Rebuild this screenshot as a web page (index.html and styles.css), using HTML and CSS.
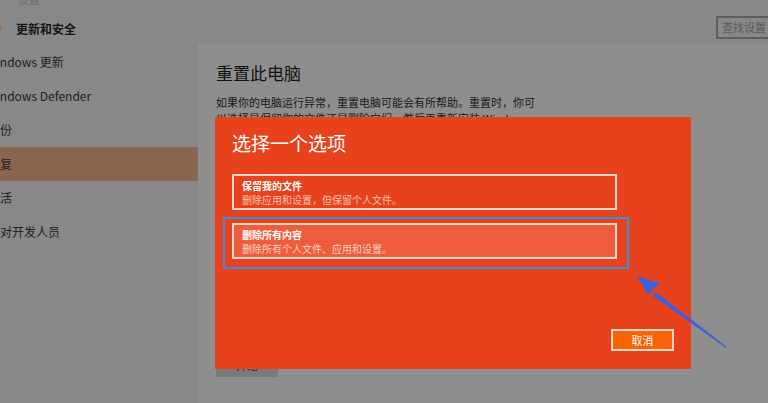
FILE: index.html
```html
<!DOCTYPE html>
<html lang="zh-CN">
<head>
  <meta charset="UTF-8">
  <title>设置 - 更新和安全</title>
  <link rel="stylesheet" href="styles.css">
</head>
<body>

  <div class="topbar">
    <div class="crumb">设置</div>
    <div class="title-row">
      <span class="dot"></span>
      <h1>更新和安全</h1>
    </div>
    <div class="search">查找设置</div>
  </div>

  <div class="main">
    <ul class="sidebar">
      <li>Windows 更新</li>
      <li>Windows Defender</li>
      <li>备份</li>
      <li class="active">恢复</li>
      <li>激活</li>
      <li>针对开发人员</li>
    </ul>

    <div class="content">
      <h2>重置此电脑</h2>
      <p>如果你的电脑运行异常，重置电脑可能会有所帮助。重置时，你可<br>以选择是保留你的文件还是删除它们，然后再重新安装 Windows。</p>
      <div class="start-btn">开始</div>
    </div>
  </div>

  <!-- reset dialog -->
  <div class="dialog">
    <h3>选择一个选项</h3>
    <div class="option">
      <div class="opt-title">保留我的文件</div>
      <div class="opt-desc">删除应用和设置，但保留个人文件。</div>
    </div>
    <div class="focus-ring">
      <div class="option selected">
        <div class="opt-title">删除所有内容</div>
        <div class="opt-desc">删除所有个人文件、应用和设置。</div>
      </div>
    </div>
    <div class="dialog-foot">
      <button class="cancel-btn">取消</button>
    </div>
  </div>

  <svg class="pointer" width="100" height="80" viewBox="0 0 100 80">
    <polygon points="92,74 21,19 18,23 91,75" fill="#3f5fd6"/>
    <polygon points="2,3 25,10 13,22" fill="#3f5fd6"/>
  </svg>

</body>
</html>
```

FILE: styles.css
```css
body {
  margin: 0;
  width: 768px;
  height: 403px;
  overflow: hidden;
  position: relative;
  font-family: "Noto Sans CJK SC", "Liberation Sans", sans-serif;
  background: #8e8e8e;
  color: #1c1c1c;
}
.topbar {
  height: 44px;
  background: #888888;
  position: relative;
}
.crumb {
  position: absolute;
  left: 18px;
  top: -9px;
  font-size: 11px;
  color: #6e6e6e;
}
.title-row {
  display: flex;
  align-items: center;
  height: 44px;
  padding-top: 12px;
  box-sizing: border-box;
}
.dot {
  width: 4px;
  height: 6px;
  margin-left: -2px;
  background: #a07050;
  border-radius: 2px;
}
.title-row h1 {
  margin: 0 0 0 14px;
  font-size: 12px;
  font-weight: bold;
  color: #151515;
}
.search {
  position: absolute;
  right: -14px;
  top: 16px;
  width: 58px;
  height: 19px;
  border: 2px solid #5e5e5e;
  font-size: 11px;
  line-height: 19px;
  padding-left: 4px;
  color: #5a5a5a;
}
.main {
  display: flex;
  height: 359px;
}
.sidebar {
  list-style: none;
  margin: 0;
  padding: 1px 0 0;
  width: 198px;
  background: #888888;
  overflow: hidden;
}
.sidebar li {
  height: 34px;
  line-height: 34px;
  font-size: 12px;
  color: #1e1e1e;
  margin-left: -14px;
  white-space: nowrap;
}
.sidebar li.active {
  background: #8a6650;
  margin-left: 0;
  text-indent: -12px;
}
.sidebar li:nth-child(3),
.sidebar li:nth-child(5),
.sidebar li:nth-child(6) {
  margin-left: -12px;
}
.content {
  flex: 1;
  padding: 16px 18px;
  background: #8e8e8e;
}
.content h2 {
  margin: 0;
  font-size: 17px;
  font-weight: normal;
  color: #111;
}
.content p {
  margin: 9px 0 0;
  font-size: 11px;
  line-height: 16px;
  color: #181818;
}
.start-btn {
  margin-top: 234px;
  width: 62px;
  height: 17px;
  background: #7a7a7a;
  color: #2a2a2a;
  font-size: 11px;
  line-height: 10px;
  text-align: center;
  overflow: hidden;
}
.dialog {
  position: absolute;
  left: 215px;
  top: 117px;
  width: 476px;
  height: 252px;
  background: #e8421c;
  box-sizing: border-box;
  padding: 13px 0 0 17px;
  color: #fff;
}
.dialog h3 {
  margin: 0 0 18px;
  font-size: 19px;
  font-weight: normal;
  line-height: 26px;
}
.option {
  width: 373px;
  height: 29px;
  border: 2px solid #f7d9d0;
  padding: 3px 0 0 8px;
  margin-bottom: 7px;
}
.opt-title {
  font-size: 10px;
  font-weight: bold;
  line-height: 13px;
}
.opt-desc {
  font-size: 10px;
  line-height: 15px;
  color: #f8c2b2;
}
.focus-ring {
  margin-left: -9px;
  width: 395px;
  border: 2px solid #3b8de0;
  padding: 4px 0 8px 7px;
}
.option.selected {
  margin: 0;
  background: #ee5c3c;
}
.option.selected .opt-desc {
  color: #fbd3c6;
}
.dialog-foot {
  display: flex;
  justify-content: flex-end;
  padding: 60px 17px 0 0;
}
.cancel-btn {
  width: 63px;
  height: 22px;
  background: #f86208;
  border: 2px solid #f9d8c6;
  color: #fff;
  font-family: inherit;
  font-size: 11px;
  padding: 0;
}
.pointer {
  position: absolute;
  left: 635px;
  top: 273px;
}
```
